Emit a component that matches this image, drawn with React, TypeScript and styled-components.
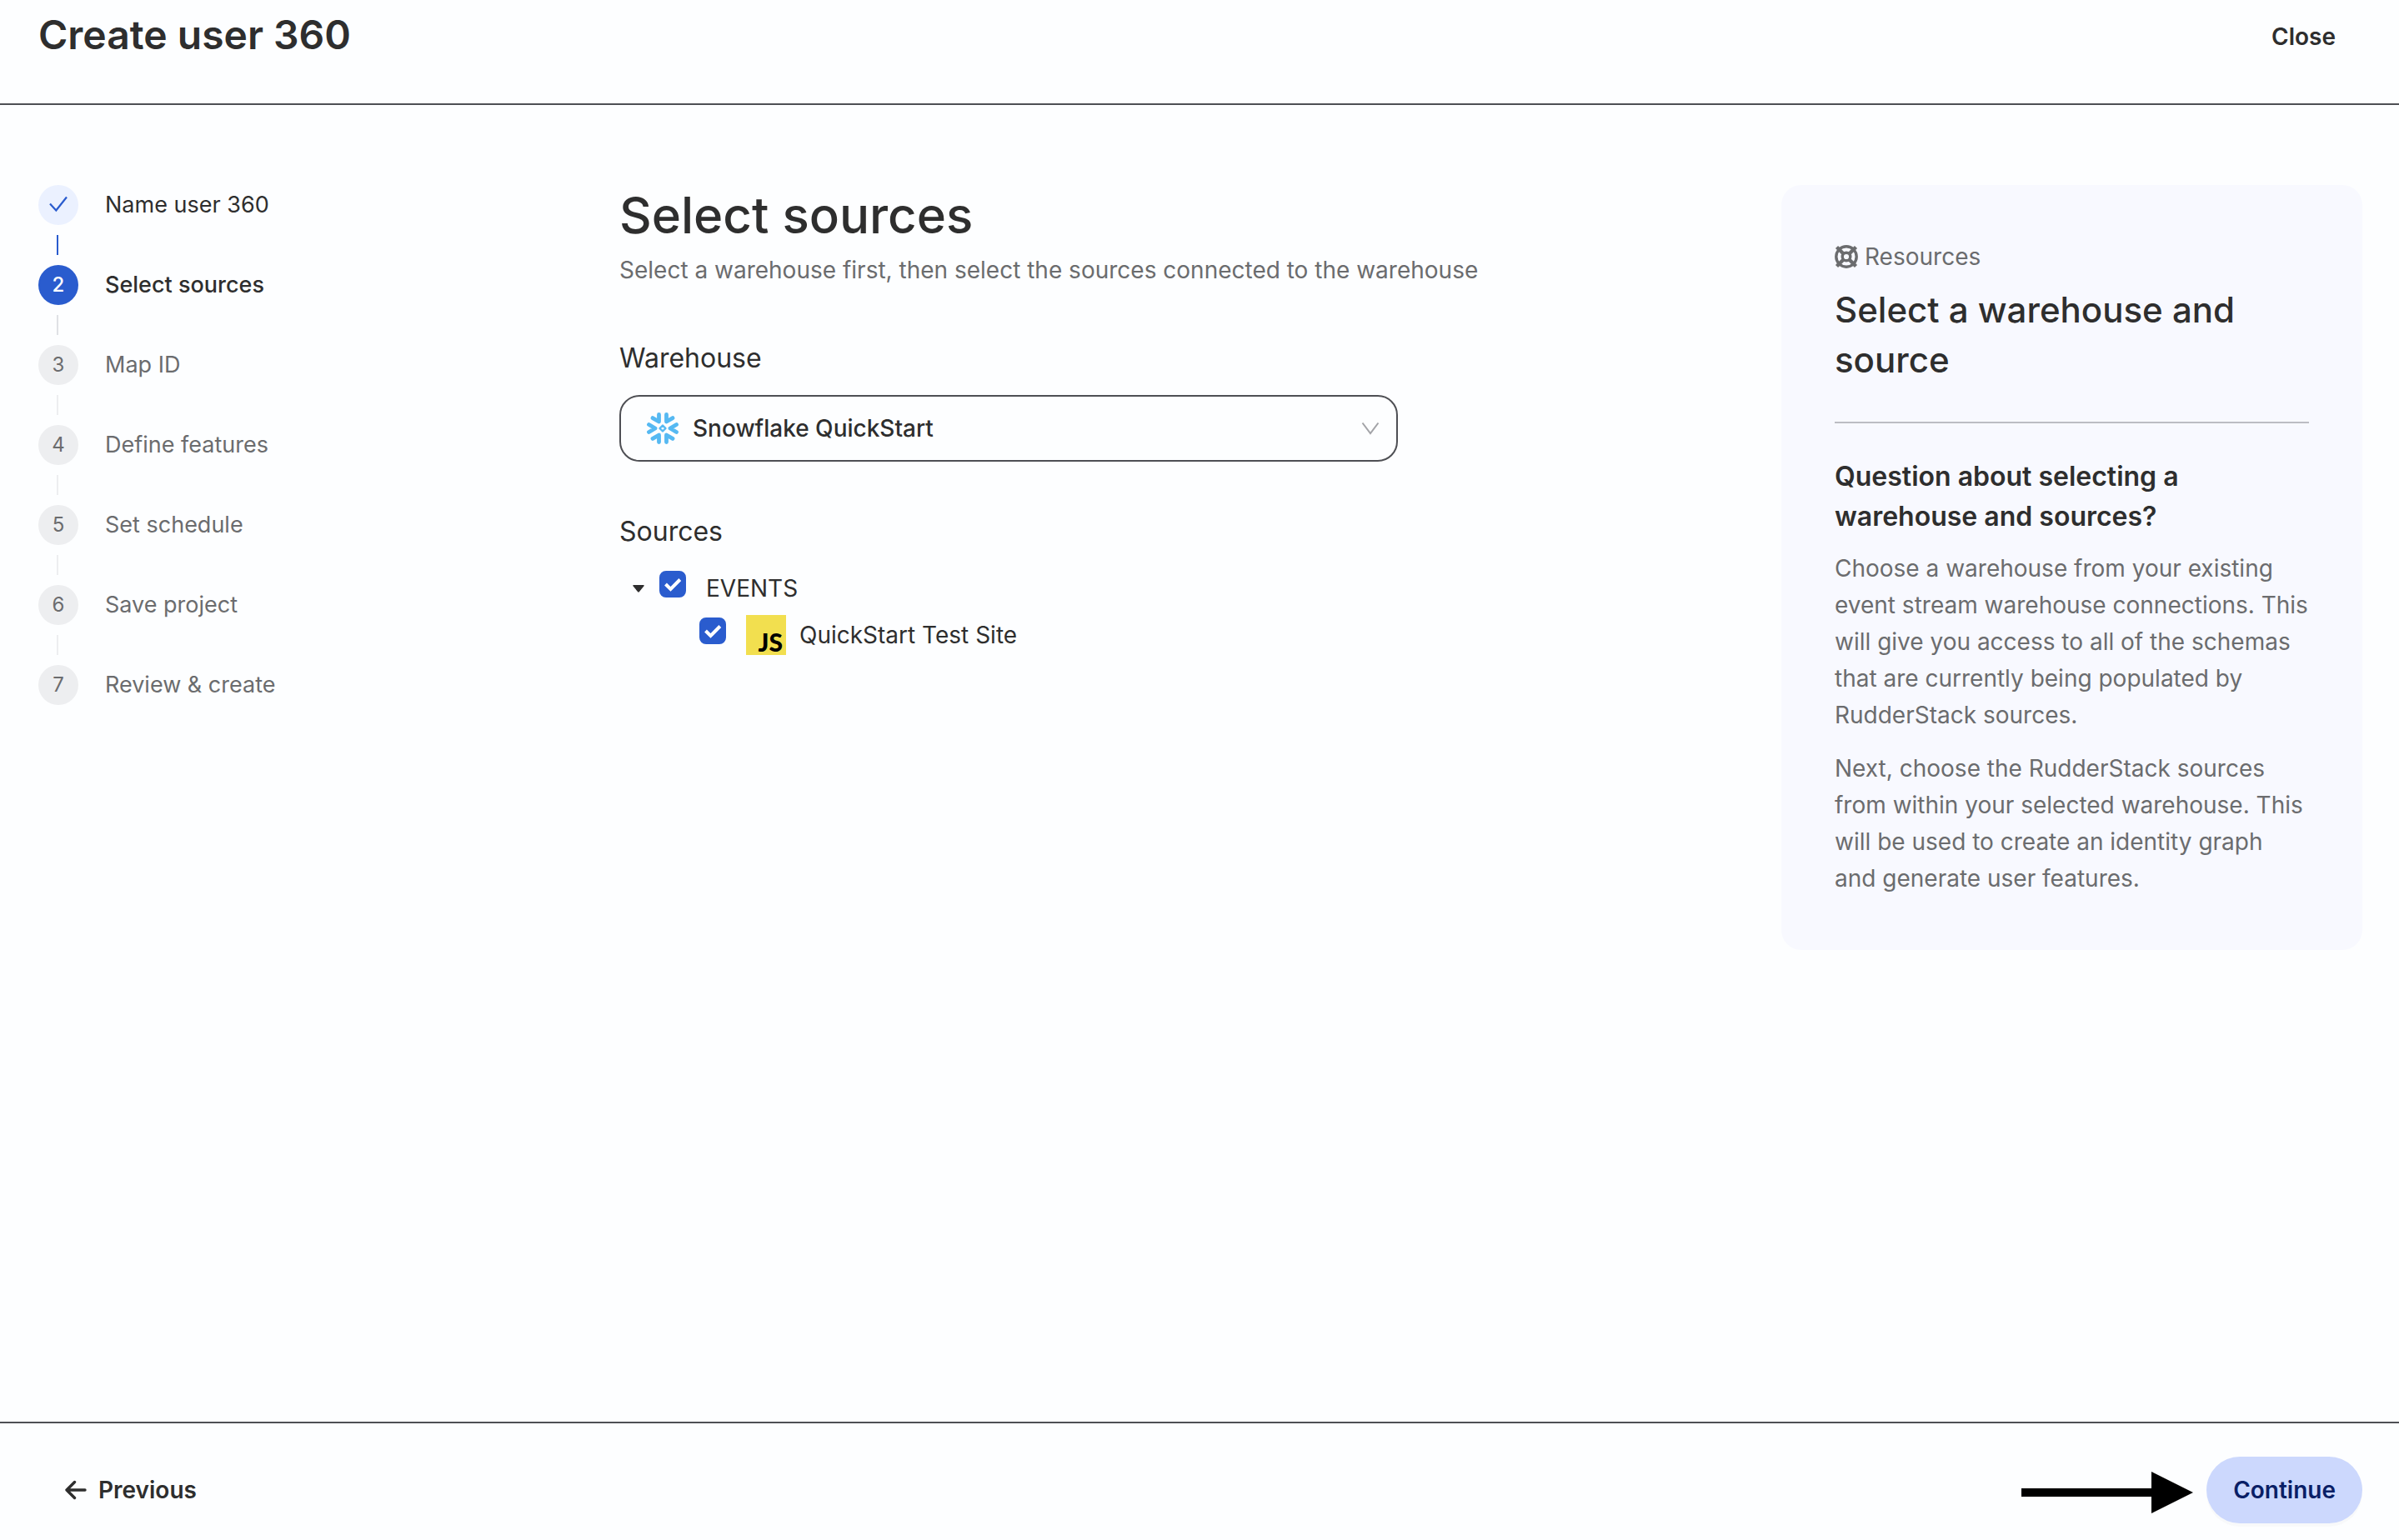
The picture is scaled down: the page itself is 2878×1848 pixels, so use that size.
import React, { useState } from 'react';
import styled, { createGlobalStyle } from 'styled-components';

const ink = '#2e2e2e';
const muted = '#6b6c6e';
const blue = '#2a5cce';
const line = '#4e4f54';

const GlobalStyle = createGlobalStyle`
  *, *::before, *::after { box-sizing: border-box; }
  body {
    margin: 0;
    background: #fdfeff;
    color: ${ink};
    font-family: Inter, "Liberation Sans", sans-serif;
    font-size: 28px;
    line-height: 44px;
  }
  h1, h2, h3, p, ol, ul { margin: 0; padding: 0; }
  ol, ul { list-style: none; }
  button, select { font: inherit; color: inherit; }
`;

const Page = styled.div`
  display: flex;
  flex-direction: column;
  min-height: 100vh;
`;

const Header = styled.header`
  display: flex;
  justify-content: space-between;
  align-items: flex-start;
  padding: 4px 44px 40px 46px;
  border-bottom: 2px solid ${line};
`;

const PageTitle = styled.h1`
  font-size: 48px;
  line-height: 76px;
  font-weight: 600;
`;

const TextButton = styled.button`
  display: flex;
  align-items: center;
  gap: 14px;
  height: 80px;
  padding: 0 32px;
  border: 0;
  background: none;
  font-weight: 600;
  cursor: pointer;
`;

const PrimaryButton = styled(TextButton)`
  border-radius: 40px;
  background: #ccd8fd;
  color: #0a1f66;
  box-shadow: 0 4px 0 rgba(0, 0, 0, 0.02);
`;

const Body = styled.div`
  flex: 1;
  display: grid;
  grid-template-columns: 1fr 2fr 1fr;
  align-items: start;
  padding: 96px 44px 96px 46px;
`;

type StepState = 'done' | 'current' | 'todo';

const StepItem = styled.li<{ $state: StepState }>`
  display: flex;
  align-items: center;
  gap: 32px;
  height: 48px;
  color: ${p => (p.$state === 'todo' ? muted : ink)};
  font-size: 27px;
  font-weight: ${p => (p.$state === 'current' ? 500 : 400)};
`;

const StepMark = styled.span<{ $state: StepState }>`
  display: flex;
  align-items: center;
  justify-content: center;
  width: 48px;
  height: 48px;
  border-radius: 50%;
  font-size: 24px;
  background: ${p => ({ done: '#ebf1ff', current: blue, todo: '#edeef0' })[p.$state]};
  color: ${p => ({ done: blue, current: '#ffffff', todo: muted })[p.$state]};
`;

const Connector = styled.li<{ $color: string }>`
  width: 2px;
  height: 24px;
  margin: 12px 22px;
  background: ${p => p.$color};
`;

const SectionTitle = styled.h2`
  font-size: 60px;
  line-height: 72px;
  font-weight: 500;
`;

const Subtitle = styled.p`
  margin-top: 8px;
  color: ${muted};
`;

const FieldLabel = styled.label`
  display: block;
  margin: 60px 0 20px;
  font-size: 32px;
  line-height: 48px;
`;

const SelectBox = styled.div`
  position: relative;
  width: 67%;
`;

const Select = styled.select`
  display: block;
  width: 100%;
  height: 80px;
  padding: 0 80px 0 86px;
  border: 2px solid ${line};
  border-radius: 24px;
  background: transparent;
  font-weight: 500;
  appearance: none;
`;

const SelectIcon = styled.span<{ $side: 'left' | 'right' }>`
  position: absolute;
  top: 0;
  bottom: 0;
  ${p => (p.$side === 'left' ? 'left: 32px;' : 'right: 22px;')}
  display: flex;
  align-items: center;
  pointer-events: none;
`;

const TreeHeading = styled.h3`
  margin: 60px 0 16px;
  font-size: 32px;
  line-height: 48px;
  font-weight: 400;
`;

const TreeRow = styled.li<{ $depth: number }>`
  display: flex;
  align-items: center;
  height: 56px;
  padding-left: ${p => (p.$depth ? 96 : 16)}px;
`;

const Toggle = styled.button`
  display: flex;
  align-items: center;
  justify-content: flex-start;
  width: 32px;
  height: 32px;
  padding: 0;
  border: 0;
  background: none;
`;

const TreeLabel = styled.label`
  display: flex;
  align-items: center;
`;

const CheckWrap = styled.span`
  display: grid;
  margin: 0 24px 10px 0;
  > * { grid-area: 1 / 1; }
`;

const Checkbox = styled.input`
  appearance: none;
  width: 32px;
  height: 32px;
  margin: 0;
  border: 2px solid ${blue};
  border-radius: 8px;
  &:checked { background: ${blue}; }
  & + svg { visibility: hidden; pointer-events: none; }
  &:checked + svg { visibility: visible; }
`;

const JsBadge = styled.span`
  display: flex;
  align-items: flex-end;
  justify-content: flex-end;
  width: 48px;
  height: 48px;
  margin-right: 16px;
  padding: 0 4px 0 0;
  background: #f2df4f;
  color: #000;
  font: 900 30px/32px Lato, sans-serif;
`;

const Card = styled.aside`
  padding: 64px;
  border-radius: 24px;
  background: #f8f9ff;
`;

const CardTag = styled.p`
  display: flex;
  align-items: center;
  gap: 8px;
  color: ${muted};
`;

const CardTitle = styled.h2`
  margin-top: 12px;
  padding-bottom: 44px;
  border-bottom: 2px solid #bcbdc3;
  font-size: 42px;
  line-height: 60px;
  font-weight: 500;
`;

const CardQuestion = styled.h3`
  margin: 40px 0 16px;
  font-size: 32px;
  line-height: 48px;
  font-weight: 600;
`;

const CardText = styled.p`
  color: ${muted};
  & + & { margin-top: 20px; }
`;

const Footer = styled.footer`
  display: flex;
  justify-content: space-between;
  align-items: center;
  padding: 40px 44px 20px 46px;
  border-top: 2px solid ${line};
`;

const FooterEnd = styled.div`
  display: flex;
  align-items: center;
  gap: 16px;
`;

const TickIcon = () => (
  <svg width="24" height="24" viewBox="0 0 24 24" fill="none" stroke="currentColor" strokeWidth="2.2">
    <path d="M2 10.5 9.3 18.5 22 2.5" />
  </svg>
);

const CheckMark = () => (
  <svg width="32" height="32" viewBox="0 0 32 32" fill="none" stroke="#fff" strokeWidth="4">
    <path d="M7.5 16 13.5 22 24.8 10.5" />
  </svg>
);

const Snowflake = () => (
  <svg width="40" height="40" viewBox="0 0 40 40" fill="none" stroke="#56b9f2" strokeWidth="4.8" strokeLinecap="round" strokeLinejoin="round">
    <path d="M15.5 3.5V12L8 7.6M24.5 3.5V12L32 7.6M15.5 36.5V28L8 32.4M24.5 36.5V28L32 32.4M3.5 15.5 11 20 3.5 24.5M36.5 15.5 29 20 36.5 24.5" />
    <path d="M20 16.5 23.5 20 20 23.5 16.5 20Z" strokeWidth="2.4" />
  </svg>
);

const Chevron = () => (
  <svg width="22" height="16" viewBox="0 0 22 16" fill="none" stroke="#a3a4a8" strokeWidth="2">
    <path d="M1.5 1.5 11 14 20.5 1.5" />
  </svg>
);

const Caret = () => (
  <svg width="14" height="9" viewBox="0 0 14 9" fill={ink}>
    <path d="M1 0H13Q14.3 .4 13.3 1.6L7.8 8.3Q7 9 6.2 8.3L.7 1.6Q-.3 .4 1 0Z" />
  </svg>
);

const Lifebuoy = () => (
  <svg width="28" height="28" viewBox="0 0 28 28" fill="none" stroke={muted} strokeWidth="3.4">
    <circle cx="14" cy="14" r="12.2" />
    <circle cx="14" cy="14" r="4.8" />
    <path d="M2.5 2.5 10.5 10.5M25.5 2.5 17.5 10.5M2.5 25.5 10.5 17.5M25.5 25.5 17.5 17.5" strokeWidth="4.4" />
  </svg>
);

const BackArrow = () => (
  <svg width="26" height="24" viewBox="0 0 26 24" fill="none" stroke="currentColor" strokeWidth="3.4" strokeLinecap="round" strokeLinejoin="round">
    <path d="M11.5 2.5 2 12 11.5 21.5M2 12H24" />
  </svg>
);

const PointerArrow = () => (
  <svg width="206" height="56" viewBox="0 0 206 56" aria-hidden="true">
    <path d="M0 26H156V6L206 31 156 56V36H0Z" fill="#000" />
  </svg>
);

const steps: { label: string; state: StepState }[] = [
  { label: 'Name user 360', state: 'done' },
  { label: 'Select sources', state: 'current' },
  { label: 'Map ID', state: 'todo' },
  { label: 'Define features', state: 'todo' },
  { label: 'Set schedule', state: 'todo' },
  { label: 'Save project', state: 'todo' },
  { label: 'Review & create', state: 'todo' },
];

const connectorColor = { done: blue, current: '#dfe1e5', todo: '#edeef0' };

function Steps() {
  return (
    <ol>
      {steps.map((step, i) => (
        <React.Fragment key={step.label}>
          {i > 0 && <Connector role="presentation" $color={connectorColor[steps[i - 1].state]} />}
          <StepItem $state={step.state} aria-current={step.state === 'current' ? 'step' : undefined}>
            <StepMark $state={step.state}>{step.state === 'done' ? <TickIcon /> : i + 1}</StepMark>
            {step.label}
          </StepItem>
        </React.Fragment>
      ))}
    </ol>
  );
}

function Check({ id }: { id: string }) {
  const [on, setOn] = useState(true);
  return (
    <CheckWrap>
      <Checkbox id={id} type="checkbox" checked={on} onChange={e => setOn(e.target.checked)} />
      <CheckMark />
    </CheckWrap>
  );
}

export default function App() {
  const [open, setOpen] = useState(true);
  return (
    <Page>
      <GlobalStyle />
      <Header>
        <PageTitle>Create user 360</PageTitle>
        <TextButton type="button">Close</TextButton>
      </Header>
      <Body>
        <Steps />
        <main>
          <SectionTitle>Select sources</SectionTitle>
          <Subtitle>Select a warehouse first, then select the sources connected to the warehouse</Subtitle>
          <FieldLabel htmlFor="warehouse">Warehouse</FieldLabel>
          <SelectBox>
            <Select id="warehouse">
              <option>Snowflake QuickStart</option>
            </Select>
            <SelectIcon $side="left"><Snowflake /></SelectIcon>
            <SelectIcon $side="right"><Chevron /></SelectIcon>
          </SelectBox>
          <TreeHeading>Sources</TreeHeading>
          <ul>
            <TreeRow $depth={0}>
              <Toggle type="button" aria-label="Toggle events" aria-expanded={open} onClick={() => setOpen(!open)}>
                <Caret />
              </Toggle>
              <TreeLabel htmlFor="events"><Check id="events" />EVENTS</TreeLabel>
            </TreeRow>
            {open && (
              <TreeRow $depth={1}>
                <TreeLabel htmlFor="site">
                  <Check id="site" />
                  <JsBadge>JS</JsBadge>
                  QuickStart Test Site
                </TreeLabel>
              </TreeRow>
            )}
          </ul>
        </main>
        <Card>
          <CardTag><Lifebuoy />Resources</CardTag>
          <CardTitle>Select a warehouse and source</CardTitle>
          <CardQuestion>Question about selecting a warehouse and sources?</CardQuestion>
          <CardText>
            Choose a warehouse from your existing event stream warehouse connections. This will give you
            access to all of the schemas that are currently being populated by RudderStack sources.
          </CardText>
          <CardText>
            Next, choose the RudderStack sources from within your selected warehouse. This will be used
            to create an identity graph and generate user features.
          </CardText>
        </Card>
      </Body>
      <Footer>
        <TextButton type="button"><BackArrow />Previous</TextButton>
        <FooterEnd>
          <PointerArrow />
          <PrimaryButton type="button">Continue</PrimaryButton>
        </FooterEnd>
      </Footer>
    </Page>
  );
}
